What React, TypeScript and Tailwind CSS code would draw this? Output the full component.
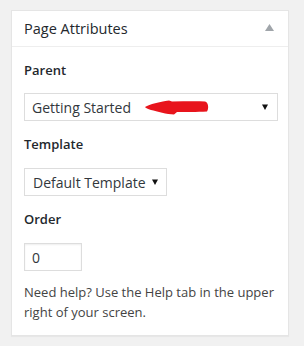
import React from 'react';

function Caret() {
  return (
    <svg width="6" height="6" viewBox="0 0 6 6">
      <path d="M0 0.5 H6 L3 6 Z" fill="#111111" />
    </svg>
  );
}

export default function App() {
  return (
    <div className="min-h-[346px] w-[304px] bg-[#f1f1f1] pt-[10px] pl-[11px] font-['Open_Sans',sans-serif]">
      <div className="w-[278px] border border-[#e5e5e5] bg-white shadow-[0_1px_1px_rgba(0,0,0,0.04)]">
        {/* header */}
        <div className="flex h-[36px] items-center justify-between border-b border-[#eeeeee] pl-[12px] pr-[14px]">
          <h2 className="text-[14.5px] leading-[20px] text-[#23282d]">Page Attributes</h2>
          <svg width="9" height="7" viewBox="0 0 9 7" className="mt-[-2px]">
            <path d="M0 7 L4.5 0 L9 7 Z" fill="#a0a5aa" />
          </svg>
        </div>

        <div className="px-[12px] pt-[14px] pb-[13px] text-[13px] text-[#23282d]">
          <p className="font-semibold leading-[18px]">Parent</p>
          <div className="relative mt-[14px] flex h-[28px] w-[254px] items-center justify-between border border-[#dddddd] pl-[7px] pr-[9px] text-[14px] text-[#32373c]">
            <span>Getting Started</span>
            <Caret />
            {/* red annotation arrow */}
            <svg
              width="64"
              height="16"
              viewBox="0 0 64 16"
              className="absolute left-[120px] top-[5px]"
            >
              <path
                d="M0 8 C5 5 14 3 24 1.5 L27 2.5 C38 2.5 50 2 60 2.5 C63.5 3 64 10 62 12.5 C52 13 40 13 32 13 L29 15.5 C22 15.5 12 12.5 6 11 C3 10 0.5 9 0 8 Z"
                fill="#e8141c"
              />
            </svg>
          </div>

          <p className="mt-[14px] font-semibold leading-[18px]">Template</p>
          <div className="mt-[15px] flex h-[28px] w-[143px] items-center justify-between border border-[#dddddd] pl-[8px] pr-[8px] text-[14px] text-[#32373c]">
            <span>Default Template</span>
            <Caret />
          </div>

          <p className="mt-[14px] font-semibold leading-[18px]">Order</p>
          <div className="mt-[15px] flex h-[28px] w-[58px] items-center border border-[#dddddd] pl-[7px] text-[14px] text-[#32373c] shadow-[inset_0_1px_2px_rgba(0,0,0,0.07)]">
            0
          </div>

          <p className="mt-[12px] leading-[19.5px] text-[#444444]">
            Need help? Use the Help tab in the upper right of your screen.
          </p>
        </div>
      </div>
    </div>
  );
}
